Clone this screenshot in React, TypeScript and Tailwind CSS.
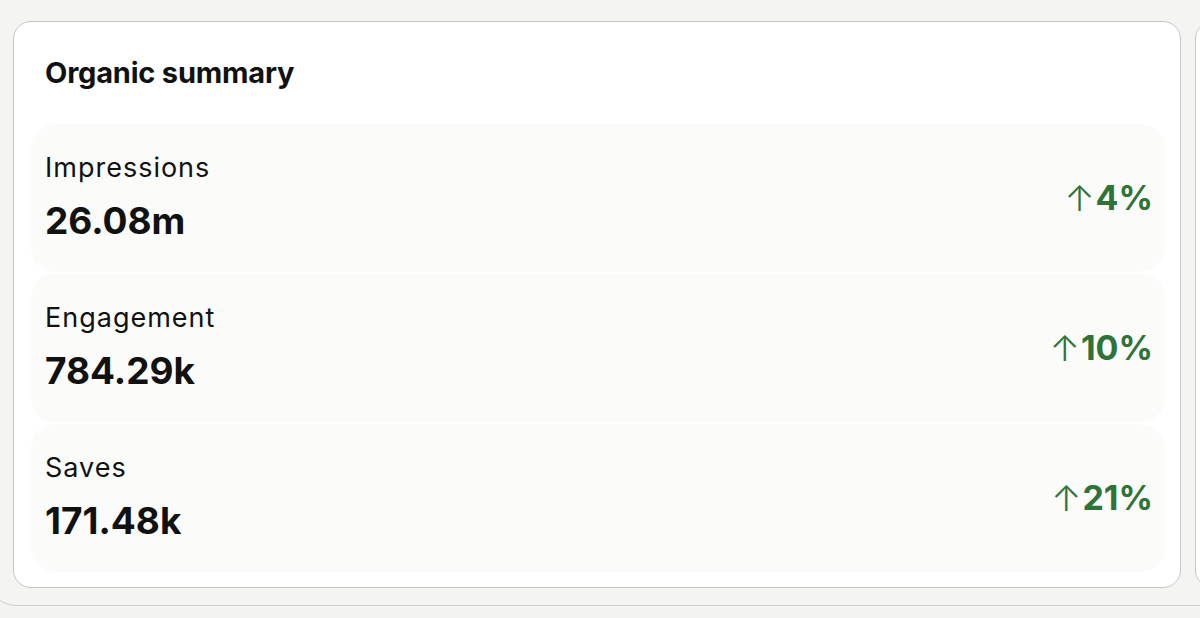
import React from "react";

const rows = [
	{ label: "Impressions", value: "26.08m", change: "4%" },
	{ label: "Engagement", value: "784.29k", change: "10%" },
	{ label: "Saves", value: "171.48k", change: "21%" },
];

export default function App() {
	return (
		<div
			className="h-[618px] w-[1200px] overflow-hidden bg-[#f3f3f1]"
			style={{ fontFamily: "Inter, 'Noto Sans', sans-serif" }}
		>
			{/* outer panel, top is off screen */}
			<div className="-ml-[12px] -mt-[40px] flex h-[646px] w-[1300px] gap-[14px] rounded-[28px] border-[1.5px] border-[#cfcfcb] bg-[#f4f4f2] pl-[24px] pt-[60px]">
				<div className="flex h-[567px] w-[1168px] shrink-0 flex-col rounded-[18px] border-[1.5px] border-[#c6c6c2] bg-white pl-[17px] pr-[15px]">
					<h2 className="mt-[36px] pl-[14px] text-[29px] font-bold leading-[29px] tracking-[-0.2px] text-[#111]">
						Organic summary
					</h2>
					<div className="mt-[37px] flex flex-col gap-[2px]">
						{rows.map((r) => (
							<div
								key={r.label}
								className="flex h-[148px] items-center justify-between rounded-[24px] bg-[#fbfbf9] pl-[14px] pr-[12px]"
							>
								<div className="flex h-full flex-col pt-[28px]">
									<span className="text-[27px] leading-[32px] tracking-[1px] text-[#111]">
										{r.label}
									</span>
									<span className="mt-[17px] text-[37px] font-bold leading-[40px] text-[#111]">
										{r.value}
									</span>
								</div>
								<div className="flex items-center text-[34px] font-bold leading-[34px] text-[#2e7338]">
									<span className="mr-[1px] text-[36px] font-light">↑</span>
									{r.change}
								</div>
							</div>
						))}
					</div>
				</div>
				<div className="h-[567px] w-[200px] shrink-0 rounded-[18px] border-[1.5px] border-[#c6c6c2] bg-white" />
			</div>
		</div>
	);
}
